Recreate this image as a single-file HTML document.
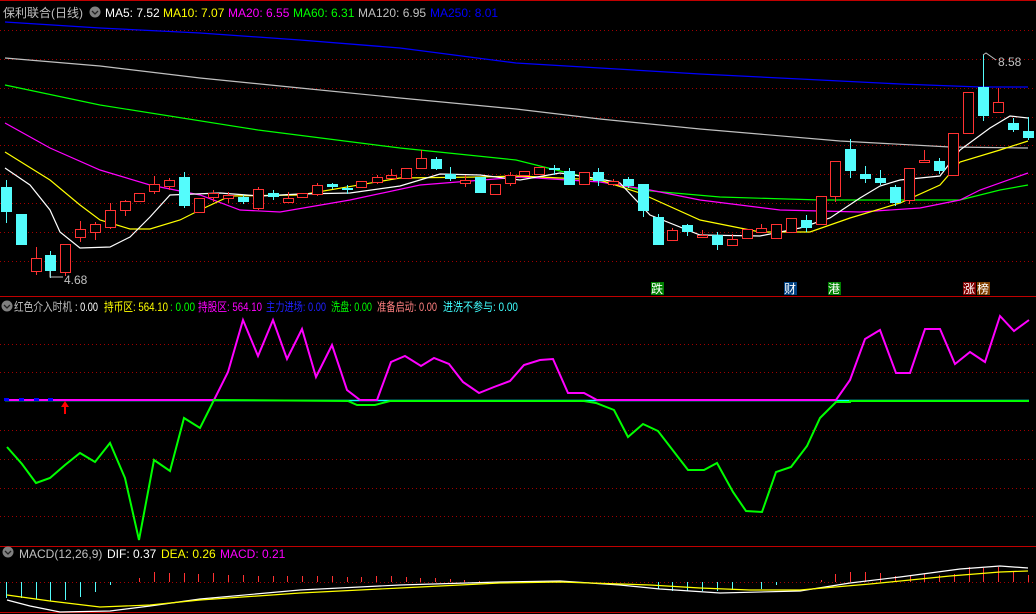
<!DOCTYPE html>
<html><head><meta charset="utf-8"><style>
html,body{margin:0;padding:0;background:#000;}
svg{display:block;}
text{font-family:"Liberation Sans","Noto Sans CJK SC",sans-serif;font-size:12px;}
.r line{stroke:#ff3232;stroke-width:1}
.r rect{fill:#000;stroke:#ff3232;stroke-width:1}
.c line{stroke:#54fcfc;stroke-width:1}
.c rect{fill:#54fcfc}
.g{stroke:#a00000;stroke-width:1;stroke-dasharray:1 3}
</style></head><body>
<svg width="1036" height="614" viewBox="0 0 1036 614" xmlns="http://www.w3.org/2000/svg">
<rect width="1036" height="614" fill="#000"/>
<line x1="0" y1="0.5" x2="1036" y2="0.5" stroke="#c00000"/>
<line x1="0" y1="296.5" x2="1036" y2="296.5" stroke="#c00000"/>
<line x1="0" y1="546.5" x2="1036" y2="546.5" stroke="#c00000"/>
<line x1="0" y1="612.5" x2="1036" y2="612.5" stroke="#c00000"/>
<g class="g">
<line x1="0" y1="30.5" x2="1036" y2="30.5"/><line x1="0" y1="59.5" x2="1036" y2="59.5"/><line x1="0" y1="88.5" x2="1036" y2="88.5"/><line x1="0" y1="117.5" x2="1036" y2="117.5"/><line x1="0" y1="145.5" x2="1036" y2="145.5"/><line x1="0" y1="174.5" x2="1036" y2="174.5"/><line x1="0" y1="203.5" x2="1036" y2="203.5"/><line x1="0" y1="232.5" x2="1036" y2="232.5"/><line x1="0" y1="261.5" x2="1036" y2="261.5"/>
<line x1="0" y1="344.5" x2="1036" y2="344.5"/><line x1="0" y1="372.5" x2="1036" y2="372.5"/><line x1="0" y1="430.5" x2="1036" y2="430.5"/><line x1="0" y1="459.5" x2="1036" y2="459.5"/><line x1="0" y1="488.5" x2="1036" y2="488.5"/><line x1="0" y1="516.5" x2="1036" y2="516.5"/>
<line x1="0" y1="582.5" x2="1036" y2="582.5"/>
</g>
<polyline fill="none" stroke="#0000ff" stroke-width="1.3" points="5,22 100,28 200,33 300,40 400,48 516,63 600,68 700,74 800,79 900,84 980,87 1028,87"/>
<polyline fill="none" stroke="#c0c0c0" stroke-width="1.2" points="5,58 100,66 200,78 300,88 400,98 516,109 600,119 700,129 840,141 950,147 1028,148"/>
<polyline fill="none" stroke="#00ff00" stroke-width="1.2" points="5,85 100,105 258,130 400,148 516,160 560,171 640,190 720,197 820,200 960,200 1000,190 1028,185"/>
<polyline fill="none" stroke="#ff00ff" stroke-width="1.2" points="5,123 50,148 100,170 150,185 200,195 240,210 280,212 350,200 420,185 520,177 600,182 650,190 700,200 780,210 860,212 920,208 960,200 980,190 1028,173"/>
<polyline fill="none" stroke="#ffff00" stroke-width="1.2" points="5,152 50,180 80,205 100,220 130,229 150,229 180,220 200,210 230,196 300,195 400,178 480,177 520,176 600,180 640,193 700,220 760,232 810,232 850,218 900,203 940,185 960,162 1000,150 1028,141"/>
<polyline fill="none" stroke="#ffffff" stroke-width="1.2" points="5,168 30,185 50,210 60,232 80,248 110,247 130,237 150,217 170,195 220,193 260,196 300,194 350,193 400,186 440,174 480,175 520,180 560,173 600,179 620,183 650,215 700,235 760,236 800,228 830,218 860,198 880,186 900,180 940,176 960,150 990,128 1010,116 1028,118"/>
<g class="c">
<line x1="6.5" y1="180" x2="6.5" y2="223"/><rect x="1" y="187" width="11" height="25"/>
<rect x="16" y="214" width="11" height="31"/>
<line x1="50.5" y1="251" x2="50.5" y2="278"/><rect x="45" y="255" width="11" height="16"/>
<line x1="184.5" y1="172" x2="184.5" y2="208"/><rect x="179" y="177" width="11" height="29"/>
<line x1="243.5" y1="195" x2="243.5" y2="204"/><rect x="238" y="197" width="11" height="5"/>
<line x1="273.5" y1="190" x2="273.5" y2="200"/><rect x="268" y="193" width="11" height="4"/>
<line x1="332.5" y1="183" x2="332.5" y2="189"/><rect x="327" y="184" width="11" height="3"/>
<line x1="347.5" y1="185" x2="347.5" y2="194"/><rect x="342" y="188" width="11" height="2"/>
<line x1="436.5" y1="157" x2="436.5" y2="170"/><rect x="431" y="159" width="11" height="10"/>
<line x1="450.5" y1="167" x2="450.5" y2="181"/><rect x="445" y="174" width="11" height="5"/>
<rect x="475" y="177" width="11" height="16"/>
<line x1="554.5" y1="165" x2="554.5" y2="175"/><rect x="549" y="168" width="11" height="2"/>
<line x1="569.5" y1="168" x2="569.5" y2="185"/><rect x="564" y="171" width="11" height="14"/>
<line x1="598.5" y1="168" x2="598.5" y2="186"/><rect x="593" y="172" width="11" height="9"/>
<line x1="628.5" y1="177" x2="628.5" y2="188"/><rect x="623" y="179" width="11" height="7"/>
<line x1="643.5" y1="184" x2="643.5" y2="217"/><rect x="638" y="184" width="11" height="27"/>
<line x1="658.5" y1="214" x2="658.5" y2="245"/><rect x="653" y="217" width="11" height="28"/>
<line x1="687.5" y1="224" x2="687.5" y2="236"/><rect x="682" y="225" width="11" height="7"/>
<line x1="717.5" y1="232" x2="717.5" y2="250"/><rect x="712" y="235" width="11" height="10"/>
<line x1="806.5" y1="215" x2="806.5" y2="232"/><rect x="801" y="220" width="11" height="8"/>
<line x1="850.5" y1="139" x2="850.5" y2="178"/><rect x="845" y="149" width="11" height="22"/>
<line x1="865.5" y1="166" x2="865.5" y2="183"/><rect x="860" y="174" width="11" height="5"/>
<line x1="880.5" y1="170" x2="880.5" y2="185"/><rect x="875" y="178" width="11" height="5"/>
<line x1="895.5" y1="185" x2="895.5" y2="206"/><rect x="890" y="187" width="11" height="16"/>
<line x1="939.5" y1="158" x2="939.5" y2="174"/><rect x="934" y="161" width="11" height="10"/>
<line x1="983.5" y1="55" x2="983.5" y2="121"/><rect x="978" y="87" width="11" height="29"/>
<line x1="1013.5" y1="118" x2="1013.5" y2="132"/><rect x="1008" y="123" width="11" height="7"/>
<line x1="1028.5" y1="117" x2="1028.5" y2="140"/><rect x="1023" y="131" width="11" height="7"/>
</g>
<g class="r">
<line x1="36.5" y1="247" x2="36.5" y2="275"/><rect x="31.5" y="258.5" width="10" height="13"/>
<line x1="65.5" y1="244" x2="65.5" y2="276"/><rect x="60.5" y="244.5" width="10" height="28"/>
<line x1="80.5" y1="221" x2="80.5" y2="242"/><rect x="75.5" y="229.5" width="10" height="8"/>
<line x1="95.5" y1="222" x2="95.5" y2="240"/><rect x="90.5" y="224.5" width="10" height="8"/>
<line x1="110.5" y1="203" x2="110.5" y2="229"/><rect x="105.5" y="210.5" width="10" height="17"/>
<line x1="125.5" y1="200" x2="125.5" y2="216"/><rect x="120.5" y="201.5" width="10" height="9"/>
<rect x="134.5" y="193.5" width="10" height="8"/>
<line x1="154.5" y1="176" x2="154.5" y2="194"/><rect x="149.5" y="184.5" width="10" height="7"/>
<line x1="169.5" y1="178" x2="169.5" y2="190"/><rect x="164.5" y="180.5" width="10" height="6"/>
<rect x="194.5" y="198.5" width="10" height="14"/>
<line x1="213.5" y1="190" x2="213.5" y2="202"/><rect x="208.5" y="193.5" width="10" height="4"/>
<line x1="228.5" y1="192" x2="228.5" y2="203"/><rect x="223.5" y="195.5" width="10" height="3"/>
<line x1="258.5" y1="187" x2="258.5" y2="210"/><rect x="253.5" y="189.5" width="10" height="19"/>
<line x1="288.5" y1="192" x2="288.5" y2="202"/><rect x="283.5" y="198.5" width="10" height="4"/>
<rect x="297.5" y="193.5" width="10" height="4"/>
<line x1="317.5" y1="183" x2="317.5" y2="196"/><rect x="312.5" y="185.5" width="10" height="9"/>
<rect x="356.5" y="181.5" width="10" height="6"/>
<line x1="377.5" y1="175" x2="377.5" y2="184"/><rect x="372.5" y="177.5" width="10" height="5"/>
<line x1="391.5" y1="169" x2="391.5" y2="179"/><rect x="386.5" y="175.5" width="10" height="3"/>
<rect x="401.5" y="168.5" width="10" height="10"/>
<line x1="421.5" y1="150" x2="421.5" y2="168"/><rect x="416.5" y="158.5" width="10" height="10"/>
<line x1="465.5" y1="175" x2="465.5" y2="187"/><rect x="460.5" y="180.5" width="10" height="3"/>
<rect x="490.5" y="184.5" width="10" height="10"/>
<line x1="510.5" y1="172" x2="510.5" y2="186"/><rect x="505.5" y="175.5" width="10" height="8"/>
<rect x="519.5" y="171.5" width="10" height="4"/>
<rect x="534.5" y="167.5" width="10" height="7"/>
<rect x="579.5" y="172.5" width="10" height="12"/>
<line x1="613.5" y1="179" x2="613.5" y2="186"/><rect x="608.5" y="181.5" width="10" height="3"/>
<line x1="672.5" y1="228" x2="672.5" y2="240"/><rect x="667.5" y="230.5" width="10" height="10"/>
<line x1="702.5" y1="230" x2="702.5" y2="238"/><rect x="697.5" y="235.5" width="10" height="2"/>
<line x1="732.5" y1="234" x2="732.5" y2="246"/><rect x="727.5" y="239.5" width="10" height="6"/>
<rect x="742.5" y="229.5" width="10" height="9"/>
<line x1="761.5" y1="224" x2="761.5" y2="232"/><rect x="756.5" y="228.5" width="10" height="4"/>
<rect x="771.5" y="224.5" width="10" height="14"/>
<rect x="786.5" y="218.5" width="10" height="14"/>
<rect x="816.5" y="196.5" width="10" height="28"/>
<line x1="835.5" y1="161" x2="835.5" y2="202"/><rect x="830.5" y="161.5" width="10" height="35"/>
<line x1="909.5" y1="168" x2="909.5" y2="204"/><rect x="904.5" y="168.5" width="10" height="32"/>
<line x1="924.5" y1="150" x2="924.5" y2="162"/><rect x="919.5" y="160.5" width="10" height="2"/>
<rect x="948.5" y="133.5" width="10" height="42"/>
<rect x="963.5" y="92.5" width="10" height="41"/>
<line x1="998.5" y1="88" x2="998.5" y2="102"/><rect x="993.5" y="102.5" width="10" height="10"/>
</g>
<polyline points="50,271 50,277 63,277" fill="none" stroke="#c0c0c0"/>
<text x="64" y="284" fill="#c0c0c0">4.68</text>
<polyline points="983,55 986,53 996,60" fill="none" stroke="#c0c0c0"/>
<text x="998" y="66" fill="#c0c0c0">8.58</text>
<rect x="651" y="282" width="13" height="13" fill="#008000"/><text x="651" y="293" fill="#fff">跌</text>
<rect x="784" y="282" width="13" height="13" fill="#004080"/><text x="784" y="293" fill="#fff">财</text>
<rect x="828" y="282" width="13" height="13" fill="#008000"/><text x="828" y="293" fill="#fff">港</text>
<rect x="963" y="282" width="13" height="13" fill="#800000"/><text x="963" y="293" fill="#fff">涨</text>
<rect x="977" y="282" width="13" height="13" fill="#804000"/><text x="977" y="293" fill="#fff">榜</text>
<text x="3" y="17" fill="#c0c0c0" font-size="13" textLength="80" lengthAdjust="spacingAndGlyphs">保利联合(日线)</text>
<circle cx="95" cy="12" r="5.5" fill="#808080"/><polyline points="92,11 95,14 98,11" fill="none" stroke="#222" stroke-width="1.3"/>
<text x="105" y="17" fill="#fff">MA5: 7.52</text>
<text x="163" y="17" fill="#ffff00">MA10: 7.07</text>
<text x="228" y="17" fill="#ff00ff">MA20: 6.55</text>
<text x="293" y="17" fill="#00ff00">MA60: 6.31</text>
<text x="358" y="17" fill="#c0c0c0">MA120: 6.95</text>
<text x="430" y="17" fill="#0000ff">MA250: 8.01</text>
<line x1="5" y1="400.5" x2="1029" y2="400.5" stroke="#00ffff" stroke-width="1.5"/>
<polyline fill="none" stroke="#ff00ff" stroke-width="2" points="5,400 214,400 228,372 243,320 258,356 273,320 287,359 302,329 316,377 332,345 347,390 360,400 377,400 391,362 405,356 421,366 434,358 449,364 463,382 479,393 494,387 510,381 524,365 540,360 553,359 568,393 584,393 597,400 836,400 850,380 865,339 880,330 896,373 910,373 925,329 940,329 955,364 970,352 985,362 1000,316 1014,331 1029,320"/>
<polyline fill="none" stroke="#00ff00" stroke-width="2" points="7,447 22,464 36,483 50,478 65,465 80,453 95,462 110,443 125,478 139,540 154,460 170,471 184,418 200,428 214,400 348,401 357,405 375,405 390,401 584,401 596,403 614,410 628,437 643,424 658,431 688,470 704,470 717,463 733,492 746,511 762,512 776,472 791,467 807,446 820,418 836,402 850,402 850,401 1029,401"/>
<g fill="#0000ff"><rect x="4" y="398" width="5" height="3"/><rect x="19" y="398" width="5" height="3"/><rect x="34" y="398" width="5" height="3"/><rect x="48" y="398" width="5" height="3"/></g>
<polygon points="65,401 61,407 64,407 64,414 66,414 66,407 69,407" fill="#ff0000"/>
<circle cx="7" cy="306" r="5.5" fill="#808080"/><polyline points="4,305 7,308 10,305" fill="none" stroke="#222" stroke-width="1.3"/>
<text x="14" y="311" fill="#c0c0c0" textLength="58" lengthAdjust="spacingAndGlyphs">红色介入时机</text>
<text x="75" y="311" fill="#fff" textLength="23" lengthAdjust="spacingAndGlyphs">: 0.00</text>
<text x="104" y="311" fill="#ffff00" textLength="64" lengthAdjust="spacingAndGlyphs">持币区: 564.10</text>
<text x="170" y="311" fill="#00ff00" textLength="25" lengthAdjust="spacingAndGlyphs">: 0.00</text>
<text x="198" y="311" fill="#ff00ff" textLength="64" lengthAdjust="spacingAndGlyphs">持股区: 564.10</text>
<text x="266" y="311" fill="#2020ff" textLength="60" lengthAdjust="spacingAndGlyphs">主力进场: 0.00</text>
<text x="331" y="311" fill="#00ff00" textLength="41" lengthAdjust="spacingAndGlyphs">洗盘: 0.00</text>
<text x="377" y="311" fill="#ff8080" textLength="60" lengthAdjust="spacingAndGlyphs">准备启动: 0.00</text>
<text x="443" y="311" fill="#40ffff" textLength="75" lengthAdjust="spacingAndGlyphs">进洗不参与: 0.00</text>
<g stroke="#54fcfc" stroke-width="1">
<line x1="6.5" y1="582" x2="6.5" y2="598"/><line x1="21.5" y1="582" x2="21.5" y2="598"/><line x1="36.5" y1="582" x2="36.5" y2="599"/><line x1="50.5" y1="582" x2="50.5" y2="601"/><line x1="65.5" y1="582" x2="65.5" y2="600"/><line x1="80.5" y1="582" x2="80.5" y2="597"/><line x1="95.5" y1="582" x2="95.5" y2="592"/><line x1="110.5" y1="582" x2="110.5" y2="585"/>
<line x1="658.5" y1="582" x2="658.5" y2="589"/><line x1="672.5" y1="582" x2="672.5" y2="591"/><line x1="687.5" y1="582" x2="687.5" y2="591"/><line x1="702.5" y1="582" x2="702.5" y2="591"/><line x1="717.5" y1="582" x2="717.5" y2="591"/><line x1="732.5" y1="582" x2="732.5" y2="590"/><line x1="761.5" y1="582" x2="761.5" y2="589"/><line x1="776.5" y1="582" x2="776.5" y2="585"/>
</g>
<g stroke="#ff3232" stroke-width="1">
<line x1="139.5" y1="578" x2="139.5" y2="582"/><line x1="154.5" y1="572" x2="154.5" y2="582"/><line x1="169.5" y1="573" x2="169.5" y2="582"/><line x1="184.5" y1="573" x2="184.5" y2="582"/><line x1="198.5" y1="574" x2="198.5" y2="582"/><line x1="213.5" y1="573" x2="213.5" y2="582"/><line x1="228.5" y1="575" x2="228.5" y2="582"/><line x1="243.5" y1="575" x2="243.5" y2="582"/><line x1="258.5" y1="576" x2="258.5" y2="582"/><line x1="273.5" y1="576" x2="273.5" y2="582"/><line x1="287.5" y1="576" x2="287.5" y2="582"/><line x1="302.5" y1="576" x2="302.5" y2="582"/><line x1="317.5" y1="576" x2="317.5" y2="582"/><line x1="332.5" y1="576" x2="332.5" y2="582"/><line x1="347.5" y1="577" x2="347.5" y2="582"/><line x1="361.5" y1="577" x2="361.5" y2="582"/><line x1="376.5" y1="576" x2="376.5" y2="582"/><line x1="391.5" y1="576" x2="391.5" y2="582"/><line x1="406.5" y1="577" x2="406.5" y2="582"/><line x1="420.5" y1="578" x2="420.5" y2="582"/><line x1="435.5" y1="578" x2="435.5" y2="582"/><line x1="450.5" y1="579" x2="450.5" y2="582"/><line x1="464.5" y1="580" x2="464.5" y2="582"/><line x1="479.5" y1="581" x2="479.5" y2="582"/>
<line x1="821.5" y1="580" x2="821.5" y2="582"/><line x1="835.5" y1="574" x2="835.5" y2="582"/><line x1="850.5" y1="572" x2="850.5" y2="582"/><line x1="865.5" y1="572" x2="865.5" y2="582"/><line x1="880.5" y1="573" x2="880.5" y2="582"/><line x1="895.5" y1="576" x2="895.5" y2="582"/><line x1="910.5" y1="575" x2="910.5" y2="582"/><line x1="924.5" y1="574" x2="924.5" y2="582"/><line x1="939.5" y1="575" x2="939.5" y2="582"/><line x1="954.5" y1="574" x2="954.5" y2="582"/><line x1="969.5" y1="567" x2="969.5" y2="582"/><line x1="983.5" y1="568" x2="983.5" y2="582"/><line x1="998.5" y1="567" x2="998.5" y2="582"/><line x1="1013.5" y1="571" x2="1013.5" y2="582"/><line x1="1028.5" y1="575" x2="1028.5" y2="582"/>
</g>
<polyline fill="none" stroke="#ffffff" stroke-width="1.2" points="7,600 30,606 60,612 110,611 150,606 200,599 300,590 400,585 500,582 560,581 620,585 660,589 720,593 800,591 850,583 900,577 960,569 1000,566 1028,568"/>
<polyline fill="none" stroke="#ffff00" stroke-width="1.2" points="7,595 50,601 100,607 150,605 200,600 300,593 400,588 500,583 560,582 650,585 700,588 750,590 800,590 870,584 950,576 1000,572 1028,571"/>
<circle cx="8" cy="552" r="5.5" fill="#808080"/><polyline points="5,551 8,554 11,551" fill="none" stroke="#222" stroke-width="1.3"/>
<text x="19" y="558" fill="#c0c0c0">MACD(12,26,9)</text>
<text x="107" y="558" fill="#fff">DIF: 0.37</text>
<text x="161" y="558" fill="#ffff00">DEA: 0.26</text>
<text x="220" y="558" fill="#ff00ff">MACD: 0.21</text>
</svg>
</body></html>
